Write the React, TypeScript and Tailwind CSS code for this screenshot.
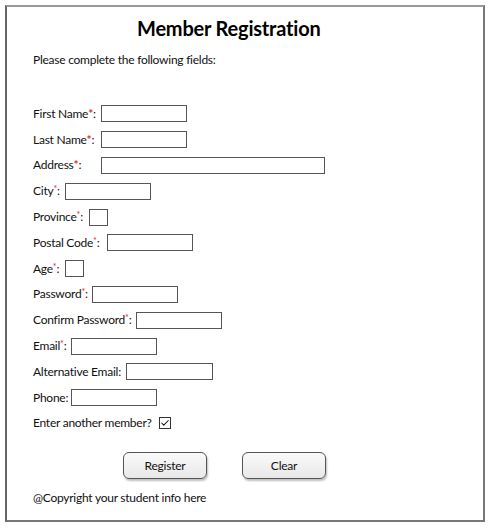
import { Check } from "lucide-react";

type Field = { label: string; required?: boolean; big?: boolean; width: number; gap: number };

const fields: Field[] = [
  { label: "First Name", required: true, big: true, width: 86, gap: 5 },
  { label: "Last Name", required: true, big: true, width: 86, gap: 7 },
  { label: "Address", required: true, big: true, width: 224, gap: 20 },
  { label: "City", required: true, width: 86, gap: 5 },
  { label: "Province", required: true, width: 19, gap: 6 },
  { label: "Postal Code", required: true, width: 86, gap: 8 },
  { label: "Age", required: true, width: 19, gap: 6 },
  { label: "Password", required: true, width: 86, gap: 4 },
  { label: "Confirm Password", required: true, width: 86, gap: 5 },
  { label: "Email", required: true, width: 86, gap: 5 },
  { label: "Alternative Email", width: 87, gap: 5 },
  { label: "Phone", width: 86, gap: 3 },
];

function Row({ f }: { f: Field }) {
  return (
    <div className="flex h-[25.8px] items-center">
      <span>
        {f.label}
        {f.required && (
          <span className={f.big ? "text-[#e02828] font-bold" : "text-[#e02828] text-[9px] align-top"}>*</span>
        )}
        :
      </span>
      <input
        className="h-[17px] border border-[#555] bg-white outline-none"
        style={{ width: f.width, marginLeft: f.gap }}
      />
    </div>
  );
}

export default function App() {
  return (
    <div className="bg-white p-[5px]" style={{ fontFamily: "Lato, 'Open Sans', sans-serif" }}>
      <div className="w-[480px] h-[517px] border-2 border-[#777] border-t-[#999] border-l-[#666] pl-[26px] text-[12px] tracking-[-0.25px] text-[#111]">
        <h1 className="pl-[104px] pt-[8px] text-[20px] font-bold leading-[26px] tracking-[-0.2px] text-black">Member Registration</h1>
        <p className="mt-[9px] leading-[20px]">Please complete the following fields:</p>
        <div className="mt-[31px] flex flex-col">
          {fields.map((f) => (
            <Row key={f.label} f={f} />
          ))}
          <div className="flex h-[25.8px] items-center">
            <span>Enter another member?</span>
            <span className="ml-[7px] flex h-[12px] w-[12px] items-center justify-center border border-[#333] bg-white">
              <Check className="h-[10px] w-[10px]" strokeWidth={2.5} />
            </span>
          </div>
        </div>
        <div className="mt-[16px] flex gap-[35px] pl-[90px]">
          <button className="h-[27px] w-[84px] rounded-[6px] border border-[#555] bg-gradient-to-b from-[#fafafa] to-[#e8e8e8] shadow-[1px_2px_2px_rgba(0,0,0,0.25)]">
            Register
          </button>
          <button className="h-[27px] w-[84px] rounded-[6px] border border-[#555] bg-gradient-to-b from-[#fafafa] to-[#e8e8e8] shadow-[1px_2px_2px_rgba(0,0,0,0.25)]">
            Clear
          </button>
        </div>
        <p className="mt-[9px] leading-[20px]">@Copyright your student info here</p>
      </div>
    </div>
  );
}
